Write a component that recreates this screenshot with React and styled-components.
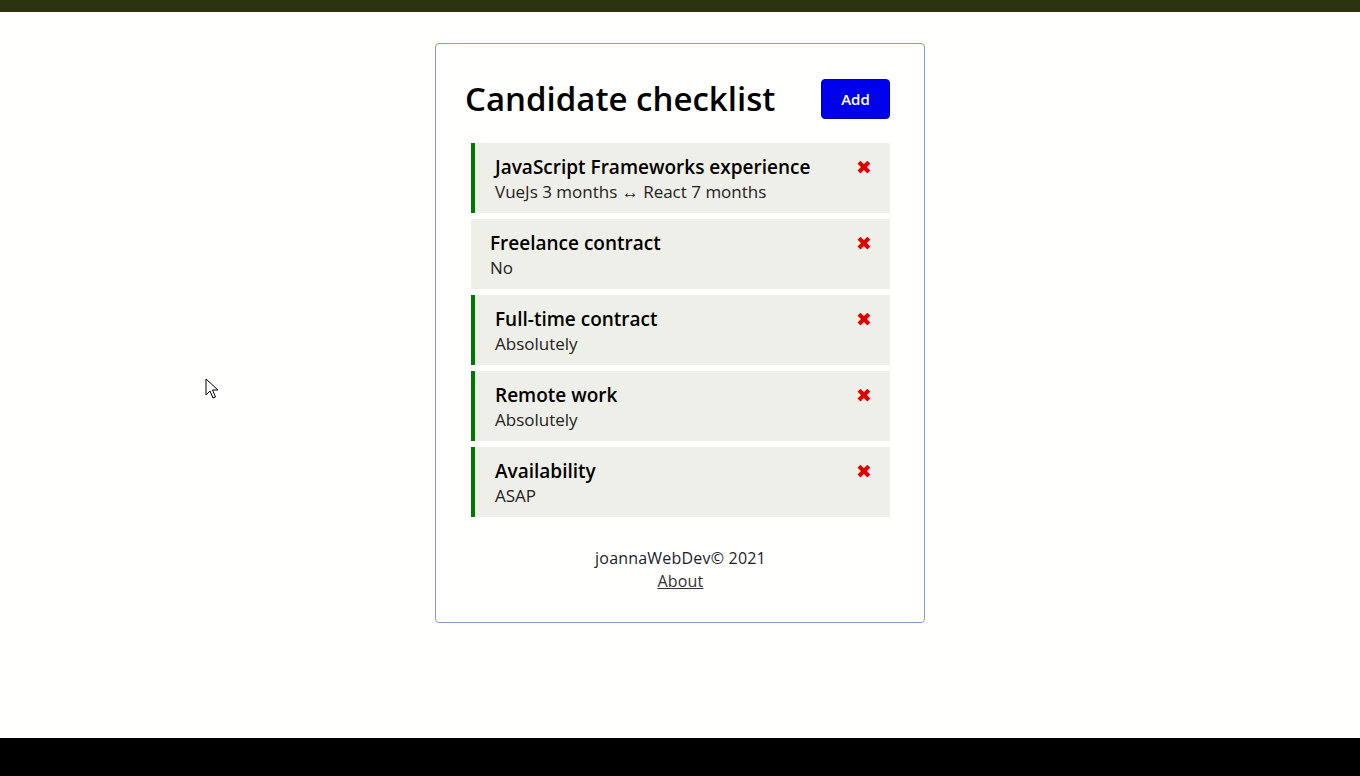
import React from "react";
import styled, { createGlobalStyle } from "styled-components";

const GlobalStyle = createGlobalStyle`
  html, body {
    margin: 0;
    padding: 0;
    background: #fff;
  }
  body {
    font-family: "Open Sans", "Liberation Sans", sans-serif;
    color: #111;
  }
`;

const Page = styled.div`
  width: 100vw;
  height: 100vh;
  display: flex;
  flex-direction: column;
  overflow: hidden;
  position: relative;
`;

const TopBar = styled.div`
  height: 12px;
  background: #2c3311;
  flex-shrink: 0;
`;

const Main = styled.main`
  flex: 1;
  background: #fffffd;
  display: flex;
  justify-content: center;
  align-items: flex-start;
  padding-top: 31px;
`;

const BottomBar = styled.div`
  height: 38px;
  background: #000;
  flex-shrink: 0;
`;

const Card = styled.section`
  width: 490px;
  height: 580px;
  box-sizing: border-box;
  border: 1px solid #7d9fd3;
  border-radius: 4px;
  padding: 34px 34px 0 29px;
  display: flex;
  flex-direction: column;
`;

const Header = styled.header`
  display: flex;
  align-items: center;
  justify-content: space-between;
  height: 41px;
`;

const Title = styled.h1`
  margin: 0;
  font-family: "Open Sans", sans-serif;
  font-size: 33px;
  font-weight: 600;
  letter-spacing: 0;
  color: #000;
`;

const AddButton = styled.button`
  width: 69px;
  height: 40px;
  border: 1px solid #0000a8;
  border-radius: 4px;
  background: #0000ee;
  color: #fff;
  font-family: "Open Sans", sans-serif;
  font-size: 15px;
  font-weight: 600;
  cursor: pointer;
`;

const List = styled.ul`
  list-style: none;
  margin: 24px 0 0 6px;
  padding: 0;
  display: flex;
  flex-direction: column;
  gap: 6px;
`;

const Item = styled.li`
  height: 70px;
  box-sizing: border-box;
  background: #efefe9;
  border-left: ${(p) => (p.$done ? "4px solid #007a00" : "none")};
  padding: 11px 18px 0 ${(p) => (p.$done ? "20px" : "19px")};
  display: flex;
  justify-content: space-between;
  align-items: flex-start;
`;

const ItemText = styled.div`
  display: flex;
  flex-direction: column;
`;

const ItemTitle = styled.div`
  font-size: 19px;
  font-weight: 600;
  line-height: 26px;
  color: #000;
`;

const ItemValue = styled.div`
  font-size: 17px;
  font-weight: 400;
  line-height: 24px;
  color: #222;
`;

const Remove = styled.button`
  border: none;
  background: none;
  padding: 0;
  margin-top: 4px;
  color: #e00000;
  font-size: 19px;
  line-height: 19px;
  cursor: pointer;
`;

const Footer = styled.footer`
  margin: 30px 0 0 6px;
  text-align: center;
  font-size: 16px;
  line-height: 23px;
  letter-spacing: 0.2px;
  color: #1c1c2a;
`;

const AboutLink = styled.a`
  color: #333;
  text-decoration: underline;
`;

const Cursor = styled.svg`
  position: absolute;
  left: 205px;
  top: 378px;
`;

const items = [
  { title: "JavaScript Frameworks experience", value: "VueJs 3 months ↔ React 7 months", done: true },
  { title: "Freelance contract", value: "No", done: false },
  { title: "Full-time contract", value: "Absolutely", done: true },
  { title: "Remote work", value: "Absolutely", done: true },
  { title: "Availability", value: "ASAP", done: true },
];

export default function App() {
  return (
    <Page>
      <GlobalStyle />
      <TopBar />
      <Main>
        <Card>
          <Header>
            <Title>Candidate checklist</Title>
            <AddButton>Add</AddButton>
          </Header>
          <List>
            {items.map((item) => (
              <Item key={item.title} $done={item.done}>
                <ItemText>
                  <ItemTitle>{item.title}</ItemTitle>
                  <ItemValue>{item.value}</ItemValue>
                </ItemText>
                <Remove aria-label="remove">✖</Remove>
              </Item>
            ))}
          </List>
          <Footer>
            <div>joannaWebDev© 2021</div>
            <AboutLink href="#">About</AboutLink>
          </Footer>
        </Card>
      </Main>
      <BottomBar />
      <Cursor width="14" height="22" viewBox="0 0 14 22">
        <path d="M1 1 L1 17 L5 13 L8 20 L10.5 19 L7.5 12 L13 12 Z" fill="#fff" stroke="#000" strokeWidth="1" />
      </Cursor>
    </Page>
  );
}
